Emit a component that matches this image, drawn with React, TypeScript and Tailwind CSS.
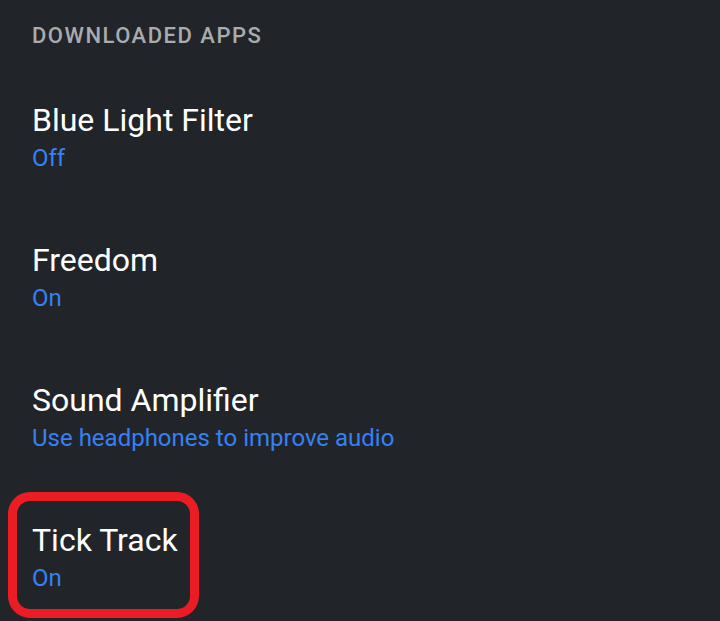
import React from "react";

const items = [
  { title: "Blue Light Filter", sub: "Off" },
  { title: "Freedom", sub: "On" },
  { title: "Sound Amplifier", sub: "Use headphones to improve audio" },
  { title: "Tick Track", sub: "On", highlight: true },
];

export default function App() {
  return (
    <div
      className="w-[720px] h-[621px] overflow-hidden bg-[#212529] pl-[32px]"
      style={{ fontFamily: "Roboto, 'Noto Sans', sans-serif" }}
    >
      <div className="pt-[22px] text-[22px] leading-[28px] font-medium tracking-[1.5px] text-[#a9abad]">
        DOWNLOADED APPS
      </div>
      <div className="mt-[14px] flex flex-col">
        {items.map((it) => (
          <div key={it.title} className="h-[140px] pt-[36px]">
            <div className="relative inline-flex flex-col gap-[3px]">
              {it.highlight && (
                <div className="absolute left-[-24px] top-[-28px] w-[191px] h-[126px] border-[9px] border-[#ec1c24] rounded-[22px]" />
              )}
              <div className="text-[32px] leading-[40px] text-white">{it.title}</div>
              <div className="text-[24px] leading-[30px] text-[#3780f4]">{it.sub}</div>
            </div>
          </div>
        ))}
      </div>
    </div>
  );
}
